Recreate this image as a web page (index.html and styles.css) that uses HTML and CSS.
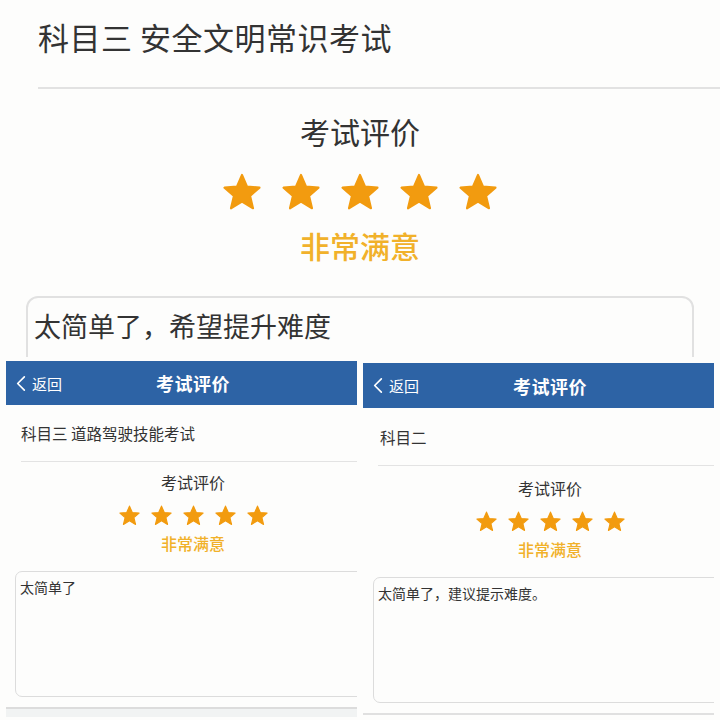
FILE: index.html
```html
<!DOCTYPE html>
<html lang="zh-CN">
<head>
<meta charset="utf-8">
<title>考试评价</title>
<link rel="stylesheet" href="styles.css">
</head>
<body>
<svg width="0" height="0" class="defs" aria-hidden="true">
  <defs>
    <symbol id="star" viewBox="0 0 24 24">
      <polygon points="12,2.2 14.9,8.9 22,9.5 16.6,14.2 18.3,21.3 12,17.5 5.7,21.3 7.4,14.2 2,9.5 9.1,8.9" fill="#f29b0f" stroke="#f29b0f" stroke-width="1.2" stroke-linejoin="round"/>
    </symbol>
  </defs>
</svg>
<div class="collage">
  <section class="hero">
    <h1 class="hero-title">科目三 安全文明常识考试</h1>
    <div class="hero-divider"></div>
    <div class="rating hero-rating">
      <div class="rating-label">考试评价</div>
      <div class="stars">
        <svg class="star"><use href="#star"/></svg>
        <svg class="star"><use href="#star"/></svg>
        <svg class="star"><use href="#star"/></svg>
        <svg class="star"><use href="#star"/></svg>
        <svg class="star"><use href="#star"/></svg>
      </div>
      <div class="rating-text">非常满意</div>
    </div>
    <div class="comment hero-comment">太简单了，希望提升难度</div>
  </section>

  <div class="panels">
    <section class="phone phone-left">
      <div class="phone-inner">
        <header class="navbar">
          <div class="back">
            <svg class="chev" viewBox="0 0 12 20"><polyline points="10,2 2,10 10,18" fill="none" stroke="#fff" stroke-width="2" stroke-linecap="round" stroke-linejoin="round"/></svg>
            <span>返回</span>
          </div>
          <div class="nav-title">考试评价</div>
        </header>
        <div class="exam-name">科目三 道路驾驶技能考试</div>
        <div class="divider"></div>
        <div class="rating phone-rating">
          <div class="rating-label">考试评价</div>
          <div class="stars">
            <svg class="star"><use href="#star"/></svg>
            <svg class="star"><use href="#star"/></svg>
            <svg class="star"><use href="#star"/></svg>
            <svg class="star"><use href="#star"/></svg>
            <svg class="star"><use href="#star"/></svg>
          </div>
          <div class="rating-text">非常满意</div>
        </div>
        <div class="comment phone-comment">太简单了</div>
        <div class="bottom-bar"></div>
      </div>
    </section>

    <section class="phone phone-right">
      <div class="phone-inner">
        <header class="navbar">
          <div class="back">
            <svg class="chev" viewBox="0 0 12 20"><polyline points="10,2 2,10 10,18" fill="none" stroke="#fff" stroke-width="2" stroke-linecap="round" stroke-linejoin="round"/></svg>
            <span>返回</span>
          </div>
          <div class="nav-title">考试评价</div>
        </header>
        <div class="exam-name">科目二</div>
        <div class="divider"></div>
        <div class="rating phone-rating">
          <div class="rating-label">考试评价</div>
          <div class="stars">
            <svg class="star"><use href="#star"/></svg>
            <svg class="star"><use href="#star"/></svg>
            <svg class="star"><use href="#star"/></svg>
            <svg class="star"><use href="#star"/></svg>
            <svg class="star"><use href="#star"/></svg>
          </div>
          <div class="rating-text">非常满意</div>
        </div>
        <div class="comment phone-comment">太简单了，建议提示难度。</div>
        <div class="bottom-line"></div>
      </div>
    </section>
  </div>
</div>
</body>
</html>
```

FILE: styles.css
```css
* { box-sizing: border-box; }

html, body {
  margin: 0;
  padding: 0;
  background: #fdfdfc;
}

body {
  width: 720px;
  height: 720px;
  overflow: hidden;
  font-family: "Noto Sans CJK SC", "Noto Sans", "DejaVu Sans", sans-serif;
  color: #333;
}

.defs { position: absolute; }

.collage {
  display: flex;
  flex-direction: column;
  gap: 4px;
}

/* ---------- Hero (enlarged top screenshot) ---------- */
.hero {
  height: 357px;
  overflow: hidden;
  background: #fdfdfc;
}

.hero-title {
  margin: 0;
  padding: 13px 0 0 38px;
  font-size: 31px;
  font-weight: 400;
  line-height: 48px;
  color: #333;
  letter-spacing: 0.5px;
}

.hero-divider {
  margin: 26px 0 0 38px;
  height: 2px;
  background: #e2e2e2;
}

.rating {
  display: flex;
  flex-direction: column;
  align-items: center;
}

.stars {
  display: flex;
}

.star { display: block; }

.rating-text {
  color: #f1b12a;
  font-weight: 500;
}

.hero-rating {
  padding-top: 22px;
}

.hero-rating .rating-label {
  font-size: 30px;
  line-height: 40px;
  color: #333;
}

.hero-rating .stars {
  margin-top: 20px;
  gap: 17px;
}

.hero-rating .star {
  width: 42px;
  height: 42px;
}

.hero-rating .rating-text {
  margin-top: 12px;
  font-size: 30px;
  line-height: 40px;
}

.hero-comment {
  margin: 31px 0 0 26px;
  width: 668px;
  height: 120px;
  border: 2px solid #e1e1e1;
  border-radius: 12px;
  padding: 4px 0 0 6px;
  font-size: 27px;
  line-height: 48px;
  color: #333;
}

/* ---------- Phone screenshots ---------- */
.panels {
  display: flex;
  gap: 6px;
  padding-left: 6px;
}

.phone {
  width: 351px;
  height: 359px;
  overflow: hidden;
  background: #fdfdfc;
}

.phone-right {
  margin-top: 2px;
}

.phone-inner {
  width: 374px;
}

.navbar {
  position: relative;
  height: 44px;
  background: #2d63a5;
  display: flex;
  align-items: center;
  justify-content: center;
  color: #fff;
}

.phone-right .navbar { height: 45px; }

.back {
  position: absolute;
  left: 10px;
  top: 0;
  bottom: 0;
  display: flex;
  align-items: center;
  gap: 6px;
  font-size: 15px;
}

.chev {
  width: 10px;
  height: 17px;
}

.nav-title {
  font-size: 18px;
  font-weight: 700;
  letter-spacing: 0.5px;
}

.exam-name {
  height: 56px;
  display: flex;
  align-items: center;
  padding-left: 15px;
  font-size: 15.5px;
  color: #333;
}

.phone-right .exam-name {
  height: 57px;
  padding-left: 17px;
}

.divider {
  margin-left: 15px;
  height: 1px;
  background: #e3e3e3;
}

.phone-rating {
  padding-top: 8px;
}

.phone-right .phone-rating {
  padding-top: 10px;
}

.phone-rating .rating-label {
  font-size: 16px;
  line-height: 24px;
  color: #333;
}

.phone-rating .stars {
  margin-top: 10px;
  gap: 9px;
}

.phone-rating .star {
  width: 23px;
  height: 23px;
}

.phone-rating .rating-text {
  margin-top: 4px;
  font-size: 16px;
  line-height: 24px;
}

.phone-comment {
  margin: 16px 0 0 9px;
  width: 380px;
  height: 126px;
  border: 1px solid #dcdcdc;
  border-radius: 7px;
  padding: 4px 0 0 4px;
  font-size: 14px;
  line-height: 22px;
  color: #333;
}

.phone-right .phone-comment {
  margin-left: 10px;
}

.bottom-bar {
  margin-top: 10px;
  height: 10px;
  border-top: 2px solid #dcdcdc;
  background: #f1f3f3;
}

.bottom-line {
  margin-top: 10px;
  height: 2px;
  background: #e0e0e0;
}
```
